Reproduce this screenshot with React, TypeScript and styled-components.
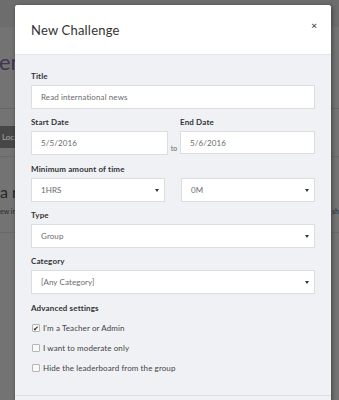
import React from "react"
import styled, { createGlobalStyle } from "styled-components"

const GlobalStyle = createGlobalStyle`
  html, body {
    margin: 0;
    padding: 0;
    height: 400px;
    overflow: hidden;
    background: #737373;
    font-family: Lato, "Open Sans", Arial, sans-serif;
  }
`

const Page = styled.div`
  position: relative;
  width: 339px;
  height: 400px;
  overflow: hidden;
  background: #737373;
`

const TopStrip = styled.div`
  height: 27px;
  background: #6d6d6d;
`

const PageHeading = styled.div`
  height: 82px;
  padding-top: 22px;
  box-sizing: border-box;
  margin-left: -1px;
  font-size: 22px;
  line-height: 26px;
  color: #3f3650;
  border-bottom: 1px solid #666;
`

const Toolbar = styled.div`
  height: 48px;
  padding-top: 17px;
  box-sizing: border-box;
  border-bottom: 1px solid #696969;
`

const DarkButton = styled.div`
  width: 40px;
  height: 22px;
  background: #474747;
  color: #a8a8a8;
  font-size: 8px;
  line-height: 22px;
  padding-left: 2px;
`

const Section = styled.div`
  height: 76px;
  padding-top: 26px;
  box-sizing: border-box;
  border-bottom: 1px solid #696969;
`

const SectionTitle = styled.div`
  font-size: 16px;
  line-height: 18px;
  color: #262626;
`

const SectionText = styled.div`
  font-size: 7px;
  line-height: 12px;
  color: #2b2b2b;
  margin-top: 4px;
  display: flex;
  justify-content: space-between;
`

const Modal = styled.div`
  position: absolute;
  left: 15px;
  top: 5px;
  width: 316px;
  height: 420px;
  background: #f0f1f5;
  border-radius: 3px;
  box-shadow: 1px 1px 4px rgba(0, 0, 0, 0.45);
  display: flex;
  flex-direction: column;
`

const ModalHeader = styled.div`
  height: 49px;
  flex-shrink: 0;
  background: #fff;
  border-bottom: 1px solid #e6e7eb;
  border-radius: 3px 3px 0 0;
  padding: 0 16px;
  display: flex;
  align-items: center;
  justify-content: space-between;
`

const ModalTitle = styled.h1`
  margin: 0;
  font-size: 13px;
  font-weight: 400;
  color: #333;
  letter-spacing: 0.2px;
  padding-top: 1px;
`

const CloseButton = styled.span`
  font-size: 10px;
  font-weight: 700;
  color: #555;
  margin-top: -10px;
  margin-right: -2px;
`

const ModalBody = styled.div`
  padding: 16px 16px 0;
  height: 341px;
  flex-shrink: 0;
  border-bottom: 1px solid #dedfe3;
  box-sizing: border-box;
`

const Field = styled.div`
  margin-bottom: 8px;
`

const Label = styled.div`
  font-size: 8px;
  line-height: 10px;
  font-weight: 700;
  color: #333;
  margin-bottom: 4px;
  letter-spacing: 0.15px;
`

const Box = styled.div<{ $h?: number }>`
  height: ${p => p.$h ?? 24}px;
  box-sizing: border-box;
  background: #fff;
  border: 1px solid #dcdde1;
  padding: 0 9px;
  display: flex;
  align-items: center;
  justify-content: space-between;
  font-size: 8px;
  color: #6b6b6b;
  letter-spacing: 0.1px;
`

const Caret = styled.span`
  width: 0;
  height: 0;
  border-left: 2px solid transparent;
  border-right: 2px solid transparent;
  border-top: 3px solid #333;
  margin-right: -4px;
`

const DateRow = styled.div`
  display: flex;
  align-items: flex-start;
  margin-bottom: 9px;
`

const DateCol = styled.div<{ $w: number }>`
  width: ${p => p.$w}px;
`

const ToText = styled.div`
  width: 12px;
  padding-top: 27px;
  font-size: 7px;
  color: #666;
  text-align: center;
`

const TwoCol = styled.div`
  display: grid;
  grid-template-columns: 134px 134px;
  column-gap: 16px;
`

const AdvTitle = styled(Label)`
  margin-top: 9px;
  margin-bottom: 5px;
`

const Check = styled.label`
  display: flex;
  align-items: center;
  height: 20px;
  font-size: 8px;
  color: #444;
  letter-spacing: 0.1px;
`

const CheckBox = styled.span`
  width: 6px;
  height: 6px;
  border: 1px solid #b5b5b5;
  border-radius: 1px;
  background: #f8f8f8;
  margin: 0 3px 0 1px;
  display: inline-flex;
  align-items: center;
  justify-content: center;
  font-size: 7px;
  line-height: 6px;
  color: #222;
`

function Select({ value }: { value: string }) {
  return (
    <Box>
      <span>{value}</span>
      <Caret />
    </Box>
  )
}

export default function App() {
  return (
    <Page>
      <GlobalStyle />
      <TopStrip />
      <PageHeading>enges</PageHeading>
      <Toolbar>
        <DarkButton>Location</DarkButton>
      </Toolbar>
      <Section>
        <SectionTitle>a new</SectionTitle>
        <SectionText>
          <span>ew international</span>
          <span>sh</span>
        </SectionText>
      </Section>

      <Modal>
        <ModalHeader>
          <ModalTitle>New Challenge</ModalTitle>
          <CloseButton>×</CloseButton>
        </ModalHeader>
        <ModalBody>
          <Field>
            <Label>Title</Label>
            <Box>Read international news</Box>
          </Field>

          <DateRow>
            <DateCol $w={137}>
              <Label>Start Date</Label>
              <Box>5/5/2016</Box>
            </DateCol>
            <ToText>to</ToText>
            <DateCol $w={135}>
              <Label>End Date</Label>
              <Box $h={23}>5/6/2016</Box>
            </DateCol>
          </DateRow>

          <Field>
            <Label>Minimum amount of time</Label>
            <TwoCol>
              <Select value="1HRS" />
              <Select value="0M" />
            </TwoCol>
          </Field>

          <Field>
            <Label>Type</Label>
            <Select value="Group" />
          </Field>

          <Field>
            <Label>Category</Label>
            <Select value="[Any Category]" />
          </Field>

          <AdvTitle>Advanced settings</AdvTitle>
          <Check>
            <CheckBox>✔</CheckBox>I'm a Teacher or Admin
          </Check>
          <Check>
            <CheckBox />I want to moderate only
          </Check>
          <Check>
            <CheckBox />Hide the leaderboard from the group
          </Check>
        </ModalBody>
      </Modal>
    </Page>
  )
}
